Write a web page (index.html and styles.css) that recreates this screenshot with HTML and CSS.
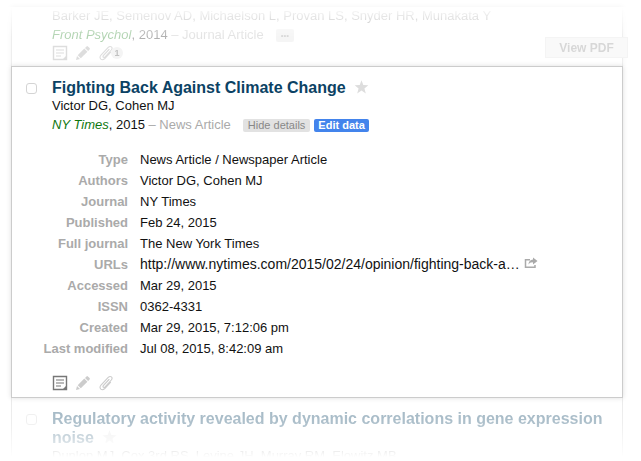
FILE: index.html
```html
<!DOCTYPE html>
<html lang="en">
<head>
<meta charset="utf-8">
<title>References</title>
<link rel="stylesheet" href="styles.css">
</head>
<body>
<svg class="sprite" aria-hidden="true">
  <symbol id="note" viewBox="0 0 16 16">
    <path d="M1.500 1.500h13v13h-13z" fill="none" stroke="currentColor" stroke-width="1.400"/>
    <path d="M4 5h8M4 8h8M4 11h5" stroke="currentColor" stroke-width="1.100"/>
    <path d="M15 10v5h-5z" fill="currentColor"/>
  </symbol>
  <symbol id="pencil" viewBox="0 0 16 16">
    <path d="M1 15l1-4 3 3zM2.700 10.200l6.600-6.600 3.100 3.100-6.600 6.600zM10 2.900l1.500-1.500q.7-.6 1.400 0l1.700 1.700q.6.7 0 1.400L13.100 6z" fill="currentColor"/>
  </symbol>
  <symbol id="clip" viewBox="0 0 16 16">
    <path d="M11 4.500L5.300 10.600q-.8 1.300.2 1.700.8.300 1.600-.5L13.300 5q1.500-2 .1-3.100-1.500-1.100-3.200.5L3 10q-1.900 2.400-.2 4.100 1.800 1.500 4-.6l5.700-6.100" fill="none" stroke="currentColor" stroke-width="1.100" stroke-linecap="round"/>
  </symbol>
  <symbol id="star" viewBox="0 0 16 16">
    <path d="M8 .8l1.900 5.100 5.400.2-4.200 3.400 1.500 5.300L8 11.800l-4.600 3 1.500-5.300L.7 6.100l5.400-.2z" fill="currentColor"/>
  </symbol>
  <symbol id="share" viewBox="0 0 14 12">
    <path d="M6 2.700H1.500v7.600h9.500V8" fill="none" stroke="currentColor" stroke-width="1.500"/>
    <path d="M9 .5L13.500 4 9 7.500V5.400Q6 5 4.400 7.500 4.800 3 9 2.600z" fill="currentColor"/>
  </symbol>
</svg>
<main class="sheet">
  <article class="item item-before">
    <div class="content">
      <p class="authors">Barker JE, Semenov AD, Michaelson L, Provan LS, Snyder HR, Munakata Y</p>
      <p class="meta"><span><em>Front Psychol</em>, 2014 <span class="kind">– Journal Article</span></span><button class="tag more" type="button" aria-label="Show details">•••</button></p>
      <div class="tools">
        <button class="tool on" type="button" aria-label="Notes"><svg><use href="#note"/></svg></button>
        <button class="tool on" type="button" aria-label="Edit"><svg><use href="#pencil"/></svg></button>
        <button class="tool on" type="button" aria-label="Files"><svg><use href="#clip"/></svg><span class="count">1</span></button>
      </div>
    </div>
    <button class="pdf" type="button">View PDF</button>
  </article>

  <article class="item item-open">
    <input class="pick" type="checkbox" aria-label="Select Fighting Back Against Climate Change">
    <div class="content">
      <h2>Fighting Back Against Climate Change <button class="star" type="button" aria-label="Star"><svg><use href="#star"/></svg></button></h2>
      <p class="authors">Victor DG, Cohen MJ</p>
      <p class="meta"><span><em>NY Times</em>, 2015 <span class="kind">– News Article</span></span><button class="tag" type="button">Hide details</button><button class="tag primary" type="button">Edit data</button></p>
      <dl class="details">
        <dt>Type</dt><dd>News Article / Newspaper Article</dd>
        <dt>Authors</dt><dd>Victor DG, Cohen MJ</dd>
        <dt>Journal</dt><dd>NY Times</dd>
        <dt>Published</dt><dd>Feb 24, 2015</dd>
        <dt>Full journal</dt><dd>The New York Times</dd>
        <dt>URLs</dt><dd><a href="#url">http://www.nytimes.com/2015/02/24/opinion/fighting-back-a…<svg class="share"><use href="#share"/></svg></a></dd>
        <dt>Accessed</dt><dd>Mar 29, 2015</dd>
        <dt>ISSN</dt><dd>0362-4331</dd>
        <dt>Created</dt><dd>Mar 29, 2015, 7:12:06 pm</dd>
        <dt>Last modified</dt><dd>Jul 08, 2015, 8:42:09 am</dd>
      </dl>
      <div class="tools">
        <button class="tool on" type="button" aria-label="Notes"><svg><use href="#note"/></svg></button>
        <button class="tool" type="button" aria-label="Edit"><svg><use href="#pencil"/></svg></button>
        <button class="tool" type="button" aria-label="Files"><svg><use href="#clip"/></svg></button>
      </div>
    </div>
  </article>

  <article class="item item-after">
    <input class="pick" type="checkbox" aria-label="Select Regulatory activity">
    <div class="content">
      <h2>Regulatory activity revealed by dynamic correlations in gene expression noise <button class="star" type="button" aria-label="Star"><svg><use href="#star"/></svg></button></h2>
      <p class="authors">Dunlop MJ, Cox 3rd RS, Levine JH, Murray RM, Elowitz MB</p>
    </div>
  </article>
</main>
</body>
</html>
```
FILE: styles.css
```css
* {
  box-sizing: border-box;
}

body {
  margin: 0;
  padding: 7px 18px 0 11px;
  background: #fff;
  color: #111;
  font: 13px/18px "Liberation Sans", Arial, sans-serif;
}

h2, p, dl, dd {
  margin: 0;
}

button {
  padding: 0;
  border: 0;
  background: none;
  color: inherit;
  font: inherit;
}

.sprite {
  display: none;
}

.item {
  position: relative;
  display: flex;
  padding: 0 8px 0 14px;
  border: solid #ccc;
  border-width: 0 1px;
  box-shadow: 0 0 5px #0002;
}

.item-before {
  height: 59px;
  padding-left: 40px;
  mask: linear-gradient(#0000 0, #0002 12px, #0005 30px, #0005) border-box;
  mask-clip: no-clip;
}

.item-open {
  padding-top: 11px;
  padding-bottom: 6px;
  border-width: 1px;
}

.item-after {
  height: 59px;
  padding-top: 11px;
  overflow: hidden;
  mask: linear-gradient(#0006 0, #0005 25px, #0003 40px, #0001 54px, #0000);
}

.pick {
  flex: none;
  width: 11px;
  height: 11px;
  margin: 5px 15px 0 0;
  appearance: none;
  border: 1px solid #d4d4d4;
  border-radius: 3px;
  background: #fff;
}

.content {
  flex: 1;
  min-width: 0;
}

h2 {
  color: #0b4264;
  font-size: 16px;
  line-height: 19px;
}

.star {
  margin-left: 4px;
  color: #ddd;
  vertical-align: top;
}

.star svg {
  display: block;
  width: 15px;
  height: 18px;
}

.meta {
  display: flex;
  align-items: center;
  height: 20px;
}

.meta em {
  color: #107810;
}

.kind {
  color: #aaa;
}

.tag {
  height: 13px;
  margin-left: 12px;
  padding: 0 5px;
  border-radius: 2px;
  background: #e2e2e2;
  color: #888;
  font-size: 11px;
  line-height: 13px;
}

.tag + .tag {
  margin-left: 4px;
  padding: 0 4px;
}

.primary {
  background: #4384ec;
  color: #fff;
  font-weight: bold;
}

.more {
  font-size: 8px;
}

.details {
  display: grid;
  grid-template-columns: 76px 1fr;
  column-gap: 12px;
  margin: 14px 0 16px;
  line-height: 21px;
}

.details dt {
  justify-self: end;
  color: #aaa;
  font-weight: bold;
  white-space: nowrap;
}

.details dd {
  height: 21px;
}

.details a {
  color: inherit;
  font-size: 14px;
  text-decoration: none;
}

.share {
  width: 14px;
  height: 12px;
  margin-left: 4px;
  color: #aaa;
}

.tools {
  display: flex;
  gap: 7px;
}

.tool {
  display: flex;
  align-items: center;
  height: 16px;
  color: #ccc;
}

.tool svg {
  width: 16px;
  height: 16px;
}

.on {
  color: #777;
}

.item-before .tool {
  color: #999;
}

.tool .count {
  width: 12px;
  margin-left: -3px;
  border-radius: 6px;
  background: #ddd;
  color: #444;
  font-size: 9px;
  font-weight: bold;
  line-height: 12px;
}

.pdf {
  position: absolute;
  top: 30px;
  right: -6px;
  width: 83px;
  height: 21px;
  border: 1px solid #ddd;
  background: #eee;
  color: #888;
  font-weight: bold;
  font-size: 12px;
}
```
